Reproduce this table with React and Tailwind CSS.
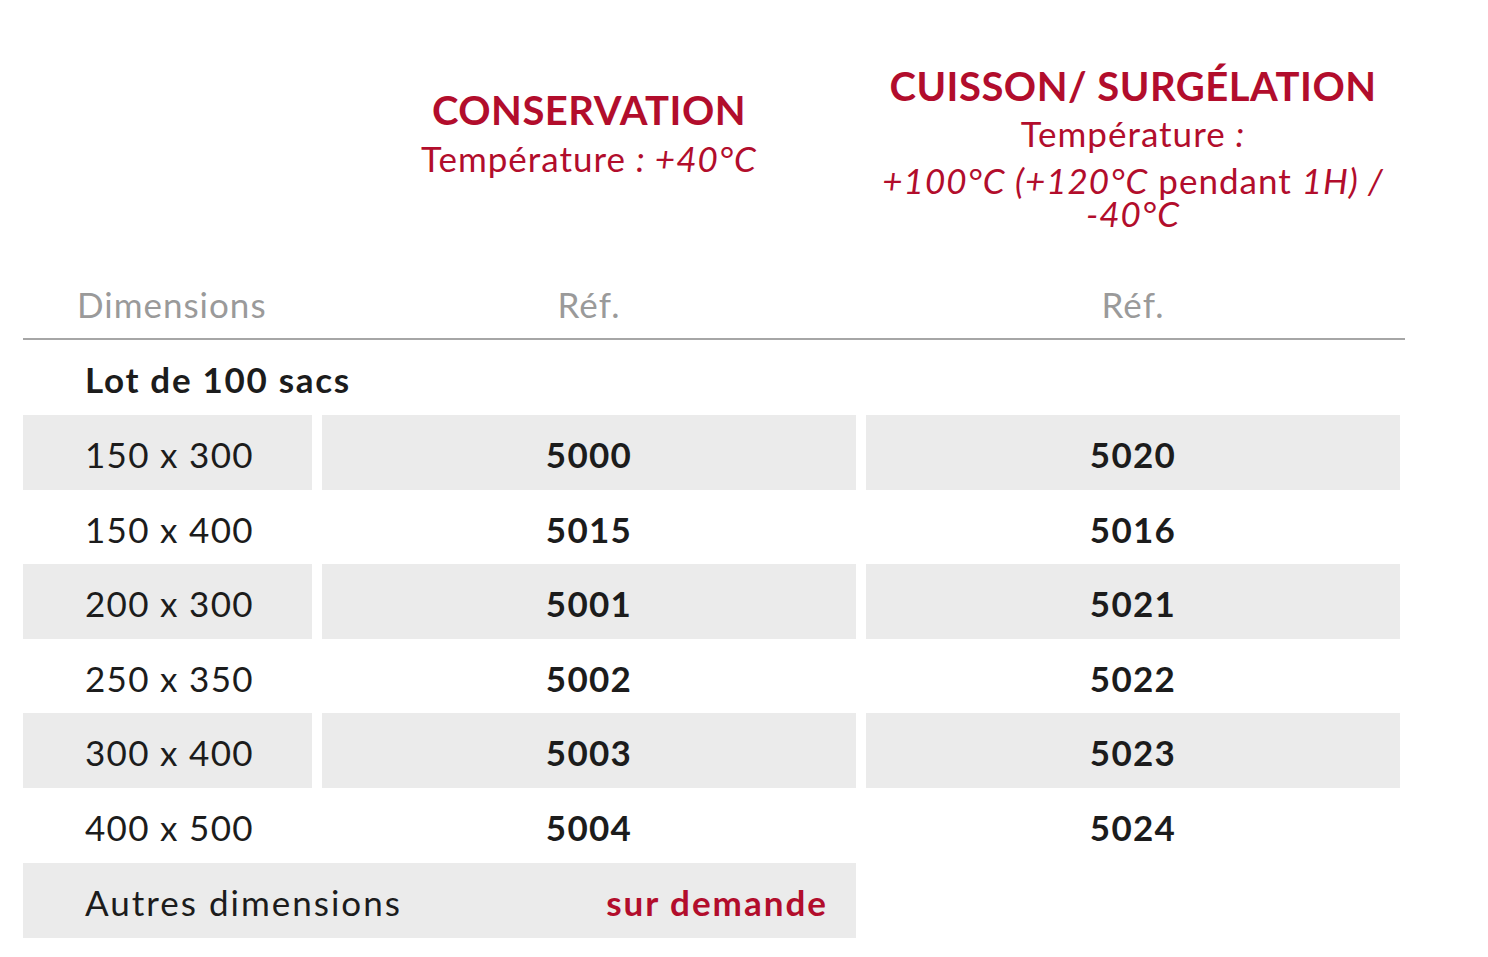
const rows = [
  { dim: "150 x 300", a: "5000", b: "5020" },
  { dim: "150 x 400", a: "5015", b: "5016" },
  { dim: "200 x 300", a: "5001", b: "5021" },
  { dim: "250 x 350", a: "5002", b: "5022" },
  { dim: "300 x 400", a: "5003", b: "5023" },
  { dim: "400 x 500", a: "5004", b: "5024" },
];

const font = { fontFamily: "Lato, 'Open Sans', sans-serif" };

function App() {
  return (
    <div className="w-[1488px] h-[957px] bg-white text-[#1c1c1c]" style={font}>
      <div className="pl-[23px] w-[1405px]">
        {/* headers */}
        <div className="grid grid-cols-[289px_534px_534px] gap-x-[10px] h-[270px] text-[#b20d2c]">
          <div></div>
          <div className="flex flex-col items-center pt-[86px]">
            <div className="text-[40px] font-bold leading-[48px] tracking-[0.5px]">CONSERVATION</div>
            <div className="text-[35px] leading-[42px] tracking-[1px] mt-[3px]">
              Température <i>: +40°C</i>
            </div>
          </div>
          <div className="flex flex-col items-center pt-[62px] text-center">
            <div className="text-[40px] font-bold leading-[48px] tracking-[0.5px] whitespace-nowrap">CUISSON/ SURGÉLATION</div>
            <div className="text-[35px] leading-[42px] tracking-[1px] mt-[2px]">
              Température <i>:</i>
            </div>
            <div className="text-[35px] leading-[33px] tracking-[1px] w-[520px] mt-[10px]">
              <i>+100°C (+120°C</i> pendant <i>1H) /</i>
              <br />
              <i>-40°C</i>
            </div>
          </div>
        </div>

        {/* column titles */}
        <div className="grid grid-cols-[289px_534px_534px] gap-x-[10px] h-[70px] items-center text-[35px] text-[#9a9a9a] tracking-[1px] border-b-2 border-[#a6a6a6]">
          <div className="pl-[54px]">Dimensions</div>
          <div className="text-center">Réf.</div>
          <div className="text-center">Réf.</div>
        </div>

        <div className="h-[75px] flex items-center pl-[62px] pt-[4px] text-[35px] font-bold tracking-[1.7px]">Lot de 100 sacs</div>

        {rows.map((r, i) => {
          const bg = i % 2 === 0 ? "bg-[#ebebeb]" : "";
          return (
            <div key={r.dim} className="grid grid-cols-[289px_534px_534px] gap-x-[10px] h-[74.6px] text-[35px] tracking-[1.3px]">
              <div className={`${bg} flex items-center pl-[62px] pt-[4px]`}>{r.dim}</div>
              <div className={`${bg} flex items-center justify-center pt-[4px] font-bold`}>{r.a}</div>
              <div className={`${bg} flex items-center justify-center pt-[4px] font-bold`}>{r.b}</div>
            </div>
          );
        })}

        <div className="w-[833px] h-[75px] bg-[#ebebeb] flex items-center justify-between pl-[62px] pr-[28px] pt-[4px] text-[35px] tracking-[2px]">
          <span>Autres dimensions</span>
          <span className="font-bold text-[#b20d2c]">sur demande</span>
        </div>
      </div>
    </div>
  );
}

export default App;
